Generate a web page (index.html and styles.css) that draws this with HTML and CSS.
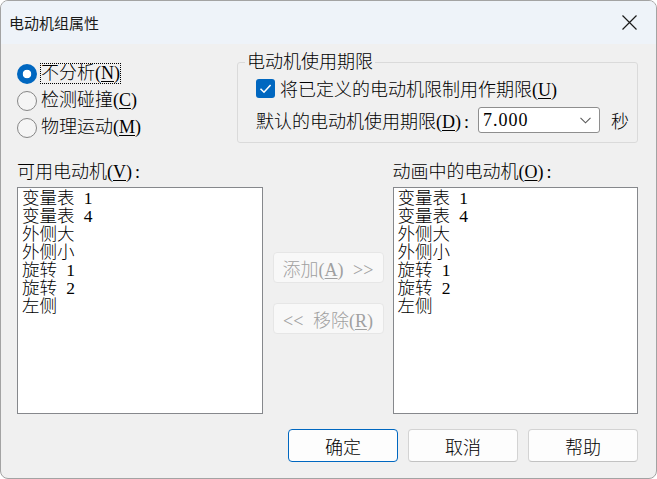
FILE: index.html
```html
<!DOCTYPE html>
<html lang="zh-CN">
<head>
  <meta charset="UTF-8">
  <title>电动机组属性</title>
  <link rel="stylesheet" href="styles.css">
</head>
<body>

<div class="window">
  <!-- 标题栏 -->
  <div class="titlebar">
    <span class="title">电动机组属性</span>
    <svg class="close" width="15" height="15" viewBox="0 0 15 15">
      <path d="M0.5 0.5 L14.5 14.5 M14.5 0.5 L0.5 14.5" stroke="#1a1a1a" stroke-width="1.2" fill="none"/>
    </svg>
  </div>

  <div class="content">
    <!-- 分析方式 + 使用期限 -->
    <div class="top-row">
      <div class="radios">
        <div class="radio-row"><span class="radio checked"></span><span class="label focus">不分析(<u>N</u>)</span></div>
        <div class="radio-row"><span class="radio"></span><span class="label">检测碰撞(<u>C</u>)</span></div>
        <div class="radio-row"><span class="radio"></span><span class="label">物理运动(<u>M</u>)</span></div>
      </div>

      <fieldset class="group">
        <legend>电动机使用期限</legend>
        <div class="check-row">
          <span class="checkbox">
            <svg width="19" height="19" viewBox="0 0 19 19"><path d="M4.5 9.8 L8 13.2 L14.6 6" stroke="#fff" stroke-width="1.6" fill="none"/></svg>
          </span>
          <span>将已定义的电动机限制用作期限(<u>U</u>)</span>
        </div>
        <div class="limit-row">
          <span>默认的电动机使用期限(<u>D</u>)<span class="colon">:</span></span>
          <div class="combo">
            <span class="combo-value">7.000</span>
            <svg width="11" height="7" viewBox="0 0 11 7"><path d="M0.5 0.8 L5.5 5.8 L10.5 0.8" stroke="#5a5a5a" stroke-width="1.1" fill="none"/></svg>
          </div>
          <span class="unit">秒</span>
        </div>
      </fieldset>
    </div>

    <!-- 电动机列表 -->
    <div class="lists">
      <div class="list-col">
        <div class="list-label">可用电动机(<u>V</u>)<span class="colon">:</span></div>
        <div class="listbox">
          <div>变量表 1</div>
          <div>变量表 4</div>
          <div>外侧大</div>
          <div>外侧小</div>
          <div>旋转 1</div>
          <div>旋转 2</div>
          <div>左侧</div>
        </div>
      </div>

      <div class="move-col">
        <button class="btn" disabled>添加(<u>A</u>) &gt;&gt;</button>
        <button class="btn" disabled>&lt;&lt; 移除(<u>R</u>)</button>
      </div>

      <div class="list-col">
        <div class="list-label">动画中的电动机(<u>O</u>)<span class="colon">:</span></div>
        <div class="listbox">
          <div>变量表 1</div>
          <div>变量表 4</div>
          <div>外侧大</div>
          <div>外侧小</div>
          <div>旋转 1</div>
          <div>旋转 2</div>
          <div>左侧</div>
        </div>
      </div>
    </div>

    <div class="footer">
      <button class="btn default">确定</button>
      <button class="btn">取消</button>
      <button class="btn">帮助</button>
    </div>
  </div>
</div>

</body>
</html>
```

FILE: styles.css
```css
* { box-sizing: border-box; }
body {
  margin: 0;
  background: #ffffff;
  font-family: "Liberation Serif", "Noto Sans CJK SC", serif;
  font-size: 18px;
  font-weight: 300;
  color: #000;
}
.window {
  width: 657px;
  height: 479px;
  border: 1px solid #a3a3a3;
  border-radius: 8px;
  background: #f0f0f0;
  overflow: hidden;
  display: flex;
  flex-direction: column;
}
.titlebar {
  height: 43px;
  background: #eef3f9;
  display: flex;
  align-items: center;
  justify-content: space-between;
  padding: 0 19px 0 8px;
}
.title {
  font-family: "Noto Sans CJK SC", sans-serif;
  font-size: 15px;
  font-weight: 400;
  color: #1a1a1a;
}
.content {
  flex: 1;
  padding: 8px 18px 0 16px;
}
u { text-decoration-thickness: 1px; text-underline-offset: 2px; }
.colon { margin-left: 3px; }

/* 单选 */
.top-row {
  display: flex;
  justify-content: space-between;
  align-items: flex-start;
}
.radios { margin-top: 8px; }
.radio-row {
  height: 27px;
  display: flex;
  align-items: center;
  gap: 3px;
}
.radio {
  width: 20px;
  height: 20px;
  border-radius: 50%;
  border: 1px solid #868686;
  background: #f5f5f5;
}
.radio.checked {
  border: none;
  background: radial-gradient(circle, #fff 0 4px, #0067c0 4.6px);
}
.label {
  line-height: 19px;
  border: 1px solid transparent;
}
.label.focus { border: 1px dotted #000; }

/* 使用期限 */
.group {
  width: 401px;
  margin: 0;
  padding: 5px 2px 9px 18px;
  border: 1px solid #dadada;
  border-radius: 3px;
}
.group legend {
  padding: 0 2px;
  margin-left: -11px;
  line-height: 20px;
}
.check-row {
  height: 22px;
  display: flex;
  align-items: center;
  gap: 5px;
}
.checkbox {
  width: 19px;
  height: 19px;
  border-radius: 3px;
  background: #0067c0;
  display: flex;
}
.limit-row {
  margin-top: 8px;
  height: 26px;
  display: flex;
  align-items: center;
  white-space: nowrap;
}
.combo {
  flex-shrink: 0;
  width: 122px;
  height: 26px;
  margin-left: 9px;
  background: #fff;
  border: 1px solid #8e8e8e;
  border-radius: 3px;
  display: flex;
  align-items: center;
  justify-content: space-between;
  padding: 0 8px 0 4px;
}
.combo-value { letter-spacing: 1px; }
.unit { margin-left: 11px; }

/* 列表 */
.lists {
  margin-top: 19px;
  display: flex;
}
.list-col { width: 246px; }
.list-label {
  line-height: 20px;
  margin-bottom: 5px;
}
.listbox {
  height: 227px;
  background: #fff;
  border: 1px solid #86888c;
  padding: 1px 4px;
  font-size: 17.5px;
  line-height: 18px;
  word-spacing: 5px;
}
.move-col {
  width: 111px;
  margin: 0 9px 0 10px;
  padding-top: 90px;
  display: flex;
  flex-direction: column;
  gap: 20px;
}
.move-col .btn { width: 111px; height: 31px; }

/* 按钮 */
.btn {
  width: 110px;
  height: 33px;
  padding: 0;
  background: #fdfdfd;
  border: 1px solid #d3d3d3;
  border-bottom-color: #c2c2c2;
  border-radius: 4px;
  font: inherit;
  color: #000;
  word-spacing: 5px;
}
.btn.default { border-color: #0067c0; }
.btn:disabled {
  background: #f8f8f8;
  border-color: #e6e6e6;
  color: #a0a0a0;
}
.footer {
  margin-top: 15px;
  display: flex;
  justify-content: flex-end;
  gap: 10px;
}
```
